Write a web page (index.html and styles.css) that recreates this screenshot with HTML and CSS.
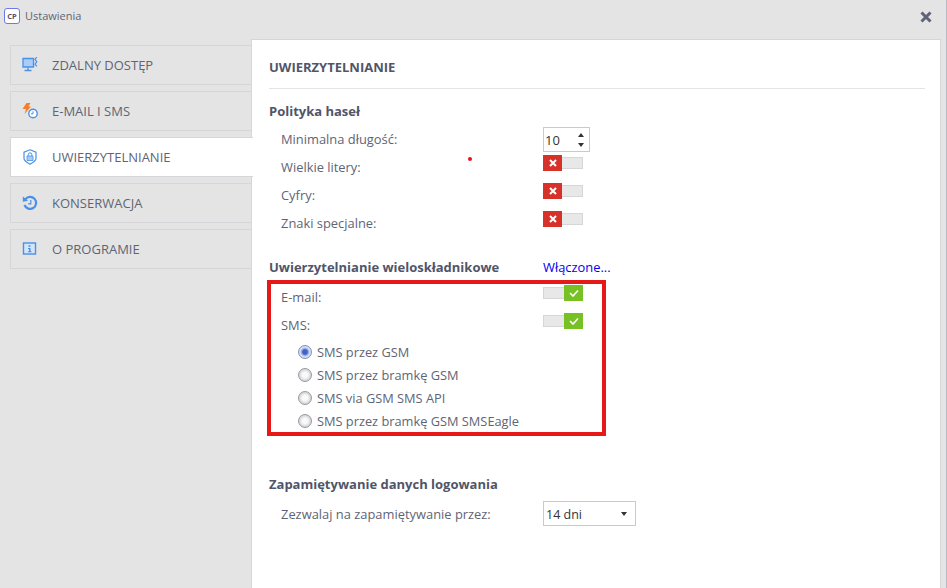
FILE: index.html
```html
<!DOCTYPE html>
<html lang="pl">
<head>
<meta charset="utf-8">
<title>Ustawienia</title>
<link rel="stylesheet" href="styles.css">
</head>
<body>
<div class="window">
  <header class="titlebar">
    <div class="app-logo">CP</div>
    <span class="app-title">Ustawienia</span>
    <svg class="close" viewBox="0 0 12 12" width="12" height="12"><path d="M1.5 1.5l9 9M10.5 1.5l-9 9" stroke="#5f6475" stroke-width="3" fill="none"/></svg>
  </header>
  <div class="body">
    <nav class="sidebar">
      <div class="nav-item">
        <svg class="nav-icon" viewBox="0 0 16 16"><path d="M1 1.500h10.500v8.500H1z" fill="#a9cdf6" stroke="#4a90e8" stroke-width="1.300"/><path d="M6 10.500v2.500M2.500 13.500h7" stroke="#4a90e8" stroke-width="1.300" fill="none"/><path d="M14.800 0l-1.800 2.500 1.800 2.200-1.800 2.500 1.800 2.200" stroke="#4a90e8" stroke-width="1.200" fill="none"/></svg>
        <span>ZDALNY DOSTĘP</span>
      </div>
      <div class="nav-item">
        <svg class="nav-icon" viewBox="0 0 16 16"><path d="M4.500 0h4L6.500 3.500h2.500L2.500 11 4 6H.5z" fill="#f47f2a"/><circle cx="11" cy="10.500" r="4.200" fill="#fff" stroke="#4a90e8" stroke-width="1.400"/><path d="M11 8.300v2.500H9" stroke="#4a90e8" stroke-width="1" fill="none"/></svg>
        <span>E-MAIL I SMS</span>
      </div>
      <div class="nav-item active">
        <svg class="nav-icon" viewBox="0 0 16 16"><path d="M8 .8l6 2.400v6.300c0 2-3.500 4.300-6 5.700-2.500-1.400-6-3.700-6-5.700V3.200z" fill="none" stroke="#4a90e8" stroke-width="1.200"/><path d="M5 7h6v4.500H5z" fill="#a9cdf6" stroke="#4a90e8" stroke-width=".8"/><path d="M6.200 7V5.600a1.800 1.800 0 0 1 3.600 0V7" fill="none" stroke="#4a90e8" stroke-width="1"/></svg>
        <span>UWIERZYTELNIANIE</span>
      </div>
      <div class="nav-item">
        <svg class="nav-icon" viewBox="0 0 16 16"><path d="M3.200 4.500A6 6 0 1 1 2.500 10" fill="none" stroke="#4a90e8" stroke-width="2.200"/><path d="M.8 1.500l5.200 4.200-5.200 1z" fill="#4a90e8"/><path d="M8.800 5v3.800H6" fill="none" stroke="#4a90e8" stroke-width="1.200"/></svg>
        <span>KONSERWACJA</span>
      </div>
      <div class="nav-item">
        <svg class="nav-icon" viewBox="0 0 16 16"><rect x="1.500" y="2" width="12" height="11" fill="#d6e6f9" stroke="#4a90e8" stroke-width="1.400"/><path d="M6.500 4.300h2v1.500h-2zM6 7h2.500v3.200h1v1H6v-1h1V8H6z" fill="#4a90e8"/></svg>
        <span>O PROGRAMIE</span>
      </div>
    </nav>
    <main class="panel">
      <h1 class="panel-title">UWIERZYTELNIANIE</h1>

      <h2 class="section-title first">Polityka haseł</h2>
      <div class="row row-input">
        <span class="label">Minimalna długość:</span>
        <div class="spinner"><span>10</span><span class="spin-arrows"><i class="up"></i><i class="down"></i></span></div>
      </div>
      <div class="row">
        <span class="label">Wielkie litery:</span>
        <div class="toggle off"><b><svg viewBox="0 0 8 8" width="8" height="8"><path d="M1 1l6 6M7 1L1 7" stroke="#fff" stroke-width="2" fill="none"/></svg></b><em></em></div>
      </div>
      <div class="row">
        <span class="label">Cyfry:</span>
        <div class="toggle off"><b><svg viewBox="0 0 8 8" width="8" height="8"><path d="M1 1l6 6M7 1L1 7" stroke="#fff" stroke-width="2" fill="none"/></svg></b><em></em></div>
      </div>
      <div class="row">
        <span class="label">Znaki specjalne:</span>
        <div class="toggle off"><b><svg viewBox="0 0 8 8" width="8" height="8"><path d="M1 1l6 6M7 1L1 7" stroke="#fff" stroke-width="2" fill="none"/></svg></b><em></em></div>
      </div>
      <span class="dot"></span>

      <div class="section-head">
        <h2 class="section-title">Uwierzytelnianie wieloskładnikowe</h2>
        <a class="more" href="#">Włączone...</a>
      </div>
      <div class="highlight">
        <div class="row">
          <span class="label">E-mail:</span>
          <div class="toggle on"><em></em><b><svg viewBox="0 0 10 8" width="10" height="8"><path d="M1 4l3 3 5-5.500" stroke="#fff" stroke-width="1.600" fill="none"/></svg></b></div>
        </div>
        <div class="row">
          <span class="label">SMS:</span>
          <div class="toggle on"><em></em><b><svg viewBox="0 0 10 8" width="10" height="8"><path d="M1 4l3 3 5-5.500" stroke="#fff" stroke-width="1.600" fill="none"/></svg></b></div>
        </div>
        <ul class="radios">
          <li><span class="radio checked"></span>SMS przez GSM</li>
          <li><span class="radio"></span>SMS przez bramkę GSM</li>
          <li><span class="radio"></span>SMS via GSM SMS API</li>
          <li><span class="radio"></span>SMS przez bramkę GSM SMSEagle</li>
        </ul>
      </div>

      <h2 class="section-title remember">Zapamiętywanie danych logowania</h2>
      <div class="row row-select">
        <span class="label">Zezwalaj na zapamiętywanie przez:</span>
        <div class="select"><span>14 dni</span><i></i></div>
      </div>
    </main>
  </div>
</div>
</body>
</html>
```
FILE: styles.css
```css
* { box-sizing: border-box; }
html, body { margin: 0; height: 100%; overflow: hidden; }
body { font-family: "Open Sans", sans-serif; color: #5f6475; font-size: 12.900px; }
.window { width: 947px; height: 588px; background: #e4e4e4; display: flex; flex-direction: column; border-right: 1px solid #b9b9c2; }
.titlebar { height: 39px; flex: none; display: flex; align-items: flex-start; padding: 8px 14px 0 4px; }
.app-logo { width: 16px; height: 16px; border: 1px solid #6d78e6; border-radius: 3px; background: #fff; font-size: 7.500px; font-weight: 700; line-height: 14px; text-align: center; color: #50556a; }
.app-title { margin-left: 5px; font-size: 11px; line-height: 16px; }
.close { margin-left: auto; margin-top: 3px; }
.body { flex: 1; display: flex; min-height: 0; }
.sidebar { width: 251px; flex: none; padding: 6px 0 0 10px; display: flex; flex-direction: column; gap: 6px; }
.nav-item { height: 40px; display: flex; align-items: center; padding-left: 11px; border: 1px solid #d5d5da; border-right: 0; font-size: 13px; color: #5f6475; }
.nav-item.active { background: #fff; position: relative; z-index: 1; width: 243px; }
.nav-icon { width: 16px; height: 16px; margin-right: 14px; flex: none; }
.panel { width: 690px; flex: none; background: #fff; border: 1px solid #d5d5da; border-width: 1px 1px 0; padding: 0 15px 0 17px; position: relative; }
.panel-title { margin: 0; height: 49px; border-bottom: 1px solid #e4e4e4; font-size: 13px; font-weight: 700; line-height: 55px; color: #50556a; }
.section-title { margin: 0; font-size: 13px; font-weight: 700; line-height: 18px; color: #50556a; }
.section-title.first { margin-top: 13px; }
.row { display: flex; height: 28px; padding-left: 12px; position: relative; }
.label { width: 262px; flex: none; line-height: 28px; }
.row-input { height: 26px; margin-top: 7px; }
.row-input .label { line-height: 24px; }
.spinner { width: 47px; height: 25px; border: 1px solid #c9c9ce; display: flex; justify-content: space-between; align-items: center; padding: 0 5px 0 1px; color: #333; font-size: 13px; }
.spin-arrows { display: flex; flex-direction: column; gap: 6px; }
.spin-arrows i { display: block; border-left: 3.500px solid transparent; border-right: 3.500px solid transparent; }
.spin-arrows .up { border-bottom: 4px solid #333; }
.spin-arrows .down { border-top: 4px solid #333; }
.toggle { display: flex; align-items: center; width: 40px; height: 16px; margin-top: 2px; }
.toggle b { width: 19px; height: 16px; flex: none; display: flex; align-items: center; justify-content: center; }
.toggle em { height: 12px; flex: 1; background: #e8e8e8; border: 1px solid #d5d5da; }
.toggle.off b { background: #d7322a; }
.toggle.on b { background: #77c125; }
.toggle.off em { border-left: 0; }
.toggle.on em { border-right: 0; }
.dot { position: absolute; left: 216px; top: 117px; width: 4px; height: 4px; border-radius: 50%; background: #e8131b; }
.section-head { display: flex; margin-top: 21px; height: 18px; }
.section-head .section-title { width: 274px; flex: none; }
.more { color: #0000ee; text-decoration: none; line-height: 18px; }
.highlight { width: 339px; height: 156px; margin: 4px 0 0 -2px; border: 4px solid #e61919; padding: 1px 0 0 10px; }
.highlight .row { padding-left: 0; }
.highlight .label { width: 262px; line-height: 24px; }
.highlight .toggle { margin-top: 0; }
.radios { list-style: none; margin: -1px 0 0; padding: 0 0 0 17px; }
.radios li { height: 23px; display: flex; align-items: center; font-size: 12.800px; }
.radio { width: 14px; height: 14px; border-radius: 50%; margin-right: 5px; flex: none; background: radial-gradient(circle at 50% 50%, #fafafa 0 30%, #e2e2e5 55%, #b4b4bb 100%); border: 1px solid #9a9aa2; }
.radio.checked { background: radial-gradient(circle, #3f62c9 0 26%, #8fa5e0 40%, #dfe5f6 58%, #aab6d2 100%); border-color: #8391b2; }
.section-title.remember { margin-top: 39px; }
.row-select { margin-top: 8px; height: 26px; }
.row-select .label { line-height: 26px; }
.select { width: 93px; height: 25px; border: 1px solid #c9c9ce; display: flex; justify-content: space-between; align-items: center; padding: 1px 8px 0 2px; color: #333; font-size: 12.500px; }
.select i { border-left: 3.500px solid transparent; border-right: 3.500px solid transparent; border-top: 4px solid #333; }
```
